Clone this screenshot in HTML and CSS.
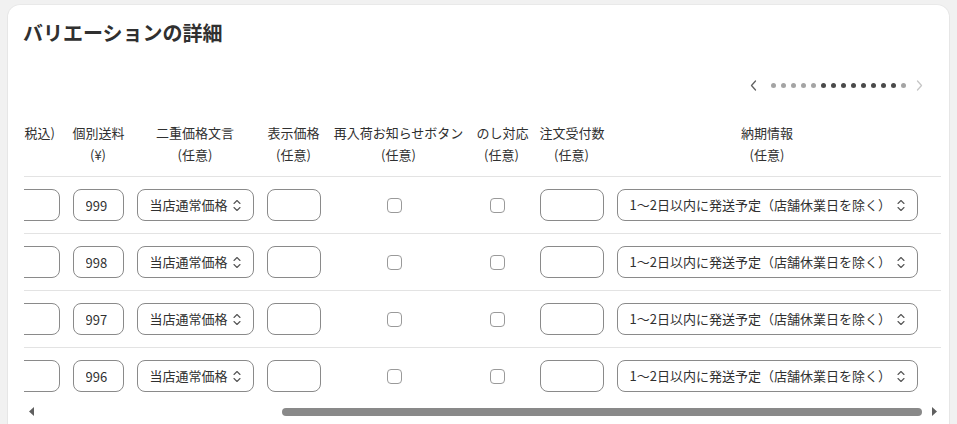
FILE: index.html
```html
<!DOCTYPE html>
<html lang="ja">
<head>
<meta charset="utf-8">
<title>バリエーションの詳細</title>
<link rel="stylesheet" href="styles.css">
</head>
<body>
<section class="card">
  <h2 class="title">バリエーションの詳細</h2>

  <div class="pager">
    <svg class="chev chev-prev" width="7" height="11" viewBox="0 0 7 11"><polyline points="5.5,1 1.5,5.5 5.5,10"/></svg>
    <div class="dots">
      <span class="dot"></span><span class="dot"></span><span class="dot"></span><span class="dot"></span><span class="dot"></span>
      <span class="dot dot-on"></span><span class="dot dot-on"></span><span class="dot dot-on"></span><span class="dot dot-on"></span>
      <span class="dot dot-on"></span><span class="dot dot-on"></span><span class="dot dot-on"></span><span class="dot dot-on"></span>
      <span class="dot"></span>
    </div>
    <svg class="chev chev-next" width="7" height="11" viewBox="0 0 7 11"><polyline points="1.5,1 5.5,5.5 1.5,10"/></svg>
  </div>

  <div class="scroller">
    <table class="grid">
      <colgroup>
        <col class="c0"><col class="c1"><col class="c2"><col class="c3"><col class="c4"><col class="c5"><col class="c6"><col class="c7">
      </colgroup>
      <thead>
        <tr>
          <th><span class="th-main">販売価格(税込)</span><span class="th-sub">(¥)</span></th>
          <th><span class="th-main">個別送料</span><span class="th-sub">(¥)</span></th>
          <th><span class="th-main">二重価格文言</span><span class="th-sub">(任意)</span></th>
          <th><span class="th-main">表示価格</span><span class="th-sub">(任意)</span></th>
          <th><span class="th-main">再入荷お知らせボタン</span><span class="th-sub">(任意)</span></th>
          <th><span class="th-main">のし対応</span><span class="th-sub">(任意)</span></th>
          <th><span class="th-main">注文受付数</span><span class="th-sub">(任意)</span></th>
          <th><span class="th-main">納期情報</span><span class="th-sub">(任意)</span></th>
        </tr>
      </thead>
      <tbody>
        <tr>
          <td><input class="field" type="text" value=""></td>
          <td><input class="field" type="text" value="999"></td>
          <td><div class="select"><span>当店通常価格</span><svg class="updown" width="8" height="13" viewBox="0 0 8 13"><polyline points="1,4.5 4,1.5 7,4.5"/><polyline points="1,8.5 4,11.5 7,8.5"/></svg></div></td>
          <td><input class="field" type="text" value=""></td>
          <td class="cell-check"><input class="check" type="checkbox"></td>
          <td class="cell-check"><input class="check" type="checkbox"></td>
          <td><input class="field" type="text" value=""></td>
          <td><div class="select"><span>1～2日以内に発送予定（店舗休業日を除く）</span><svg class="updown" width="8" height="13" viewBox="0 0 8 13"><polyline points="1,4.5 4,1.5 7,4.5"/><polyline points="1,8.5 4,11.5 7,8.5"/></svg></div></td>
        </tr>
        <tr>
          <td><input class="field" type="text" value=""></td>
          <td><input class="field" type="text" value="998"></td>
          <td><div class="select"><span>当店通常価格</span><svg class="updown" width="8" height="13" viewBox="0 0 8 13"><polyline points="1,4.5 4,1.5 7,4.5"/><polyline points="1,8.5 4,11.5 7,8.5"/></svg></div></td>
          <td><input class="field" type="text" value=""></td>
          <td class="cell-check"><input class="check" type="checkbox"></td>
          <td class="cell-check"><input class="check" type="checkbox"></td>
          <td><input class="field" type="text" value=""></td>
          <td><div class="select"><span>1～2日以内に発送予定（店舗休業日を除く）</span><svg class="updown" width="8" height="13" viewBox="0 0 8 13"><polyline points="1,4.5 4,1.5 7,4.5"/><polyline points="1,8.5 4,11.5 7,8.5"/></svg></div></td>
        </tr>
        <tr>
          <td><input class="field" type="text" value=""></td>
          <td><input class="field" type="text" value="997"></td>
          <td><div class="select"><span>当店通常価格</span><svg class="updown" width="8" height="13" viewBox="0 0 8 13"><polyline points="1,4.5 4,1.5 7,4.5"/><polyline points="1,8.5 4,11.5 7,8.5"/></svg></div></td>
          <td><input class="field" type="text" value=""></td>
          <td class="cell-check"><input class="check" type="checkbox"></td>
          <td class="cell-check"><input class="check" type="checkbox"></td>
          <td><input class="field" type="text" value=""></td>
          <td><div class="select"><span>1～2日以内に発送予定（店舗休業日を除く）</span><svg class="updown" width="8" height="13" viewBox="0 0 8 13"><polyline points="1,4.5 4,1.5 7,4.5"/><polyline points="1,8.5 4,11.5 7,8.5"/></svg></div></td>
        </tr>
        <tr>
          <td><input class="field" type="text" value=""></td>
          <td><input class="field" type="text" value="996"></td>
          <td><div class="select"><span>当店通常価格</span><svg class="updown" width="8" height="13" viewBox="0 0 8 13"><polyline points="1,4.5 4,1.5 7,4.5"/><polyline points="1,8.5 4,11.5 7,8.5"/></svg></div></td>
          <td><input class="field" type="text" value=""></td>
          <td class="cell-check"><input class="check" type="checkbox"></td>
          <td class="cell-check"><input class="check" type="checkbox"></td>
          <td><input class="field" type="text" value=""></td>
          <td><div class="select"><span>1～2日以内に発送予定（店舗休業日を除く）</span><svg class="updown" width="8" height="13" viewBox="0 0 8 13"><polyline points="1,4.5 4,1.5 7,4.5"/><polyline points="1,8.5 4,11.5 7,8.5"/></svg></div></td>
        </tr>
      </tbody>
    </table>
  </div>

  <div class="hscroll">
    <div class="hs-btn"><svg width="5" height="9" viewBox="0 0 5 9"><polygon points="5,0 0,4.5 5,9"/></svg></div>
    <div class="hs-track"><div class="hs-thumb" style="margin-left:244px;width:640px"></div></div>
    <div class="hs-btn"><svg width="5" height="9" viewBox="0 0 5 9"><polygon points="0,0 5,4.5 0,9"/></svg></div>
  </div>
</section>
</body>
</html>
```

FILE: styles.css
```css
* {
  box-sizing: border-box;
}

html,
body {
  margin: 0;
  height: 100%;
  overflow: hidden;
}

body {
  background: #f1f1f1;
  color: #303030;
  font-family: "Noto Sans CJK JP", "Noto Sans", "Liberation Sans", sans-serif;
  font-size: 13px;
}

.card {
  margin: 5px 8px 0 8px;
  padding: 16px 8px 16px 16px;
  background: #ffffff;
  border-radius: 12px;
  box-shadow: 0 0 0 1px rgba(0, 0, 0, 0.03), 0 1px 2px rgba(0, 0, 0, 0.06);
}

.title {
  margin: 0 0 0 -1px;
  font-size: 20px;
  line-height: 24px;
  font-weight: 700;
  color: #303030;
}

/* pager */
.pager {
  display: flex;
  align-items: center;
  justify-content: flex-end;
  height: 22px;
  margin-top: 29px;
  padding-right: 18px;
}

.chev {
  display: block;
  fill: none;
  stroke-width: 1.3;
  stroke-linecap: round;
  stroke-linejoin: round;
}

.chev-prev {
  stroke: #616161;
  margin-right: 14px;
}

.chev-next {
  stroke: #c6c6c6;
  margin-left: 10px;
}

.dots {
  display: flex;
  gap: 5px;
}

.dot {
  width: 5px;
  height: 5px;
  border-radius: 50%;
  background: #a4a4a4;
}

.dot-on {
  background: #4a4a4a;
}

/* table */
.scroller {
  margin-top: 16px;
  display: flex;
  justify-content: flex-end;
  overflow: hidden;
}

.grid {
  flex: none;
  width: 984px;
  table-layout: fixed;
  border-collapse: collapse;
}

.c0 { width: 109px; }
.c1 { width: 64px; }
.c2 { width: 130px; }
.c3 { width: 67px; }
.c4 { width: 143px; }
.c5 { width: 63px; }
.c6 { width: 77px; }
.c7 { width: 331px; }

.grid th {
  padding: 10px 6.5px;
  font-weight: 400;
  line-height: 22px;
  text-align: center;
  white-space: nowrap;
  vertical-align: top;
  border-bottom: 1px solid #e3e3e3;
}

.th-main,
.th-sub {
  display: block;
}

.grid td {
  padding: 12px 6.5px;
  vertical-align: middle;
  border-bottom: 1px solid #e3e3e3;
}

.grid tbody tr:last-child td {
  border-bottom: none;
}

.grid th:last-child,
.grid td:last-child {
  padding-right: 23.5px;
}

.grid td.cell-check {
  padding-right: 15.5px;
}

.field {
  display: block;
  width: 100%;
  height: 32px;
  margin: 0;
  padding: 0 12px;
  border: 1px solid #8a8a8a;
  border-radius: 8px;
  background: #ffffff;
  color: #303030;
  font: inherit;
  font-size: 13px;
  outline: none;
}

.select {
  display: flex;
  align-items: center;
  justify-content: space-between;
  height: 32px;
  padding: 0 12px;
  border: 1px solid #8a8a8a;
  border-radius: 8px;
  background: #ffffff;
  white-space: nowrap;
  line-height: 20px;
}

.updown {
  flex: none;
  fill: none;
  stroke: #555555;
  stroke-width: 1.1;
  stroke-linecap: round;
  stroke-linejoin: round;
}

.check {
  appearance: none;
  -webkit-appearance: none;
  display: block;
  width: 15px;
  height: 15px;
  margin: 0 auto;
  border: 1px solid #9a9a9a;
  border-radius: 4px;
  background: #ffffff;
}

/* horizontal scrollbar */
.hscroll {
  display: flex;
  align-items: center;
  height: 15px;
}

.hs-btn {
  flex: none;
  width: 14px;
  display: flex;
  justify-content: center;
  align-items: center;
}

.hs-btn svg {
  display: block;
  fill: #5f5f5f;
}

.hs-track {
  flex: 1;
  display: flex;
  align-items: center;
}

.hs-thumb {
  height: 8px;
  border-radius: 4px;
  background: #898989;
}
```
